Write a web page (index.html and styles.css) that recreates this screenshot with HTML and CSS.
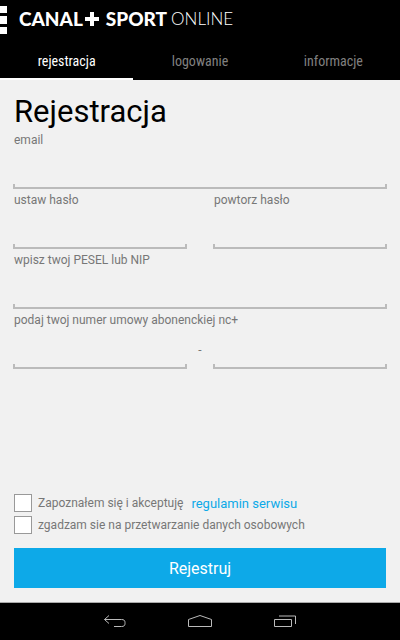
FILE: index.html
```html
<!DOCTYPE html>
<html lang="pl">
  <head>
    <meta charset="UTF-8" />
    <meta name="viewport" content="width=device-width, initial-scale=1.0" />
    <title>CANAL+ SPORT ONLINE</title>
    <link rel="stylesheet" href="styles.css">
  </head>
  <body>
    <header class="header">
      <button class="menu-button" type="button" aria-label="Menu">
        <svg width="7" height="28" viewBox="0 0 7 28" fill="#fff">
          <path d="M0 0h7v7H0zM0 10h7v8H0zM0 21h7v7H0z" />
        </svg>
      </button>
      <div class="logo">
        <span class="logo-bold">CANAL</span>
        <svg class="logo-plus" width="14" height="14" viewBox="0 0 14 14" fill="#fff">
          <path d="M5 0h4v5h5v4H9v5H5V9H0V5h5z" />
        </svg>
        <span class="logo-bold logo-sport">SPORT</span>
        <span class="logo-light">ONLINE</span>
      </div>
    </header>

    <nav class="tabs">
      <a class="tab active" href="#rejestracja">rejestracja</a>
      <a class="tab" href="#logowanie">logowanie</a>
      <a class="tab" href="#informacje">informacje</a>
    </nav>

    <form class="form" id="rejestracja">
      <h1>Rejestracja</h1>

      <label class="label" for="email">email</label>
      <input class="field" type="email" id="email" />

      <div class="row">
        <div class="column">
          <label class="label" for="password">ustaw hasło</label>
          <input class="field" type="password" id="password" />
        </div>
        <div class="column">
          <label class="label" for="passwordRepeat">powtorz hasło</label>
          <input class="field" type="password" id="passwordRepeat" />
        </div>
      </div>

      <label class="label" for="pesel">wpisz twoj PESEL lub NIP</label>
      <input class="field" type="text" id="pesel" />

      <label class="label" for="contract">podaj twoj numer umowy abonenckiej nc+</label>
      <div class="contract">
        <input class="field" type="text" id="contract" />
        <span class="dash">-</span>
        <input class="field" type="text" aria-label="numer umowy, druga część" />
      </div>

      <div class="bottom">
        <div class="check">
          <input type="checkbox" id="terms" />
          <label for="terms">Zapoznałem się i akceptuję</label>
          <a href="#regulamin">regulamin serwisu</a>
        </div>
        <div class="check">
          <input type="checkbox" id="consent" />
          <label for="consent">zgadzam sie na przetwarzanie danych osobowych</label>
        </div>
        <button class="submit" type="submit">Rejestruj</button>
      </div>
    </form>

    <!-- System navigation -->
    <footer class="system-bar">
      <button type="button" aria-label="Wstecz">
        <svg width="24" height="16" viewBox="0 0 24 16">
          <path d="M6 1.500L1.500 5.500l4.500 4M1.500 5.500h17c2.500 0 3.500 1 3.500 3v1c0 2-1 3-3.500 3H11" />
        </svg>
      </button>
      <button type="button" aria-label="Ekran główny">
        <svg width="26" height="16" viewBox="0 0 26 16">
          <path d="M1.500 12.500v-7L13 1.500l11.500 4v7z" />
        </svg>
      </button>
      <button type="button" aria-label="Ostatnie aplikacje">
        <svg width="24" height="16" viewBox="0 0 24 16">
          <path d="M1.500 5.500h17v7h-17zM6 2h16.500v8" />
        </svg>
      </button>
    </footer>
  </body>
</html>
```

FILE: styles.css
```css
* {
  box-sizing: border-box;
}
body {
  display: flex;
  flex-direction: column;
  min-height: 100vh;
  margin: 0;
  font-family: Roboto, sans-serif;
  font-size: 12px;
  background-color: #f1f1f1;
  color: #777;
}
button {
  padding: 0;
  border: none;
  background: none;
  font-family: inherit;
  cursor: pointer;
}
a {
  text-decoration: none;
}
svg {
  display: block;
}
.header {
  display: flex;
  align-items: center;
  height: 40px;
  background-color: #000;
}
.logo {
  display: flex;
  align-items: center;
  margin-left: 12px;
  padding-bottom: 3px;
  font-family: Lato, sans-serif;
  font-size: 19px;
  line-height: 20px;
  color: #fff;
}
.logo-bold {
  font-weight: 900;
}
.logo-plus {
  margin-left: 2px;
}
.logo-sport {
  margin-left: 7px;
}
.logo-light {
  margin-left: 4px;
  font-size: 17px;
  font-weight: 300;
}
.tabs {
  display: flex;
  height: 40px;
  background-color: #000;
}
.tab {
  flex: 1;
  border-bottom: 2px solid #000;
  font-family: "Roboto Condensed", Roboto, sans-serif;
  font-size: 14px;
  line-height: 42px;
  text-align: center;
  color: #808080;
}
.tab.active {
  border-bottom-color: #fff;
  color: #fff;
}
.form {
  display: flex;
  flex: 1;
  flex-direction: column;
  padding: 14px 13px;
}
h1 {
  margin: 0;
  padding-left: 1px;
  font-size: 31px;
  font-weight: 400;
  line-height: 36px;
  color: #000;
}
.label {
  padding-left: 1px;
  line-height: 20px;
}
.row {
  display: flex;
  gap: 26px;
}
.column {
  display: flex;
  flex: 1;
  flex-direction: column;
  min-width: 0;
}
/* underline with a short tick at each end */
.field {
  width: 100%;
  height: 40px;
  padding: 12px 6px 4px;
  border: none;
  border-radius: 0;
  outline: none;
  font-family: inherit;
  font-size: 16px;
  color: #000;
  background:
    linear-gradient(#bbb, #bbb) left 0 bottom 1px / 100% 2px no-repeat,
    linear-gradient(#bbb, #bbb) left 0 bottom 1px / 2px 5px no-repeat,
    linear-gradient(#bbb, #bbb) right 0 bottom 1px / 2px 5px no-repeat;
}
.contract {
  display: grid;
  grid-template-columns: 1fr 26px 1fr;
}
.dash {
  line-height: 40px;
  text-align: center;
}
.bottom {
  display: flex;
  flex-direction: column;
  gap: 4px;
  margin-top: auto;
  padding: 0 1px;
}
.check {
  display: flex;
  align-items: center;
  height: 18px;
}
.check input {
  appearance: none;
  width: 18px;
  height: 18px;
  margin: 0 6px 0 0;
  border: 1px solid #999;
  background-color: #fff;
}
.check input:checked {
  background-color: #0da9e8;
}
.check a {
  margin-left: 8px;
  font-size: 13px;
  color: #0da9e8;
}
.submit {
  height: 40px;
  margin-top: 10px;
  background-color: #0da9e8;
  font-size: 16px;
  color: #fff;
}
.system-bar {
  display: flex;
  justify-content: center;
  gap: 60px;
  height: 38px;
  border-top: 1px solid #aaa;
  background-color: #000;
}
.system-bar path {
  fill: none;
  stroke: #bbb;
}
```
